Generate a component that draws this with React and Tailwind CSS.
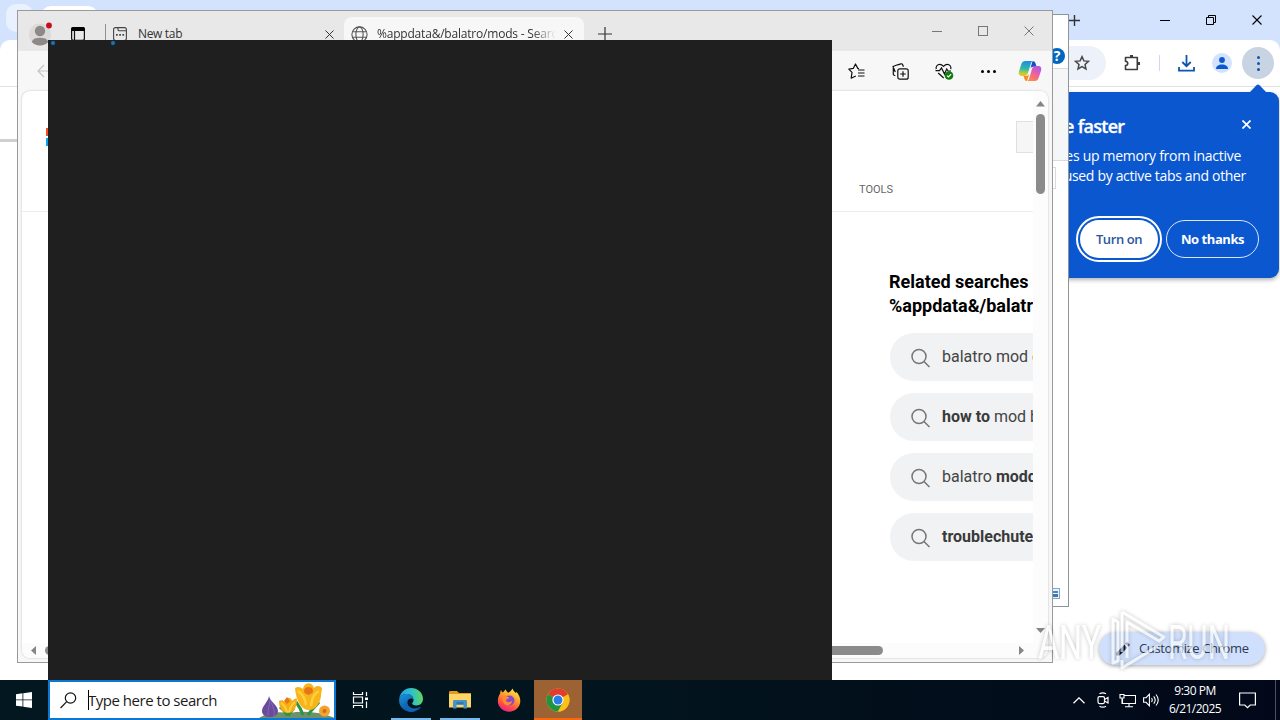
import React from 'react';

const related = [
  [{ t: 'balatro mod ' }, { t: 'discord' }],
  [{ t: 'how to', b: true }, { t: ' mod balatro' }],
  [{ t: 'balatro ' }, { t: 'modded', b: true }],
  [{ t: 'troublechute', b: true }],
];

function CloseIcon({ size = 9, width = 1.1 }) {
  return (
    <svg width={size} height={size} viewBox="0 0 10 10" fill="none" stroke="currentColor" strokeWidth={width} className="shrink-0">
      <path d="M.5.5l9 9M9.5.5l-9 9" />
    </svg>
  );
}

function PlusIcon({ size, width }) {
  return (
    <svg width={size} height={size} viewBox="0 0 14 14" fill="none" stroke="currentColor" strokeWidth={width} className="shrink-0">
      <path d="M7 0v14M0 7h14" />
    </svg>
  );
}

function GlobeIcon() {
  return (
    <svg width="17" height="17" viewBox="0 0 17 17" fill="none" stroke="#555" strokeWidth="1.1" className="shrink-0">
      <circle cx="8.5" cy="8.5" r="7.6" />
      <ellipse cx="8.5" cy="8.5" rx="3.6" ry="7.6" />
      <path d="M1.6 5.7h13.8M1.6 11.3h13.8" />
    </svg>
  );
}

function CopilotIcon() {
  return (
    <svg width="24" height="22" viewBox="0 0 24 22">
      <defs>
        <linearGradient id="cpA" x1="0.3" y1="0" x2="0.2" y2="1">
          <stop offset="0" stopColor="#1c8fe0" />
          <stop offset="0.5" stopColor="#32b8a8" />
          <stop offset="0.8" stopColor="#b9cf3c" />
          <stop offset="1" stopColor="#f4c21f" />
        </linearGradient>
        <linearGradient id="cpB" x1="0.8" y1="0" x2="0.3" y2="1">
          <stop offset="0" stopColor="#a35cf0" />
          <stop offset="0.5" stopColor="#ee5fa2" />
          <stop offset="1" stopColor="#ff8a45" />
        </linearGradient>
      </defs>
      <path d="M15 1.2c1.8 0 2.2 1.2 2.8 3l.8 2.6h-3.4c-1.6 0-2.6.8-3.1 2.4L14.6 1z" fill="#1b4fbf" />
      <path d="M7.5 1h7.8c-1.4 0-2 1.2-2.5 2.7L10 13c-.6 1.9-1.5 3-3.5 3H3.6C1.2 16 .2 14 .9 11.6L3.4 4C4 2.2 5.2 1 7.5 1z" fill="url(#cpA)" />
      <path d="M16.5 21H8.7c1.4 0 2-1.2 2.5-2.7L14 9c.6-1.9 1.5-3 3.5-3h2.9c2.4 0 3.4 2 2.7 4.400L20.600 18c-.6 1.800-1.800 3-4.100 3z" fill="url(#cpB)" />
      <path d="M9 21c-1.800 0-2.200-1.200-2.800-3l-.6-2h2.900c1.400 0 2.300-.9 2.900-2.400z" fill="#f58b2a" />
    </svg>
  );
}

function ChromeWindow() {
  return (
    <div className="absolute left-0 top-0 w-[1280px] h-[680px] bg-[#d3e3fd] flex flex-col">
      <div className="h-10 shrink-0 flex items-center">
        <div className="ml-[6px] -mt-1 w-[27px] h-[28px] rounded-[10px] bg-[#e9f1fe]" />
        <div className="ml-[8px] mt-[6px] w-[57px] h-[34px] self-start rounded-t-[10px] bg-white" />
        <div className="ml-[971px] text-[#333]"><PlusIcon size={11} width={1.8} /></div>
        <div className="ml-auto flex text-black">
          <div className="w-[46px] flex items-center justify-center">
            <svg width="10" height="10"><path d="M0 5.5h10" stroke="currentColor" /></svg>
          </div>
          <div className="w-[46px] flex items-center justify-center">
            <svg width="10" height="10" fill="none" stroke="currentColor">
              <path d="M.5 2.5h7v7h-7zM2.5 2.500v-2h7v7h-2" />
            </svg>
          </div>
          <div className="w-[46px] flex items-center justify-center"><CloseIcon size={10} /></div>
        </div>
      </div>
      <div className="h-[47px] shrink-0 bg-white rounded-t-[10px] border-b border-[#dfe1e5] flex items-center justify-end">
        <div className="w-[60px] h-[34px] rounded-r-full bg-[#edf1fa] flex items-center justify-end pr-4 mr-[17px] -ml-px">
          <svg width="16" height="16" viewBox="0 0 24 24" fill="none" stroke="#474747" strokeWidth="2.200">
            <path d="M12 2.500l2.800 6.300 6.900.7-5.200 4.600 1.500 6.800-6-3.600-6 3.600 1.500-6.800-5.200-4.600 6.900-.7z" />
          </svg>
        </div>
        <svg width="18" height="18" viewBox="0 0 18 18" fill="none" stroke="#3c3c3c" strokeWidth="1.600" className="mr-[18px]">
          <path d="M2.500 3.500h11.800v12h-11.800v-4c3-.4 3-3.800 0-4.200z" strokeLinejoin="round" />
          <path d="M7 2.300h3M15.800 8v3" strokeWidth="2.400" />
        </svg>
        <div className="w-px h-4 bg-[#cdd9ee] mr-[18px]" />
        <svg width="17" height="17" viewBox="0 0 17 17" fill="none" stroke="#0b57b0" strokeWidth="1.800" className="mr-[17px]">
          <path d="M8.500 0v11M4.300 7l4.200 4.200L12.700 7M1 12v3.700h15V12" />
        </svg>
        <div className="w-5 h-5 rounded-full bg-[#d3e3fd] mr-[10px] flex items-center justify-center">
          <svg width="14" height="14" viewBox="0 0 14 14" fill="#0b57d0">
            <circle cx="7" cy="4" r="2.900" />
            <path d="M1 13c0-3 2.500-4.500 6-4.500s6 1.500 6 4.500z" />
          </svg>
        </div>
        <div className="w-8 h-8 rounded-full bg-[#c9d4e3] mr-[6px] flex flex-col items-center justify-center gap-[3px]">
          <span className="w-[3px] h-[3px] rounded-full bg-[#0b57b0]" />
          <span className="w-[3px] h-[3px] rounded-full bg-[#0b57b0]" />
          <span className="w-[3px] h-[3px] rounded-full bg-[#0b57b0]" />
        </div>
      </div>
      <div className="flex-1 bg-white pt-[52px]">
        <div className="h-[3px] w-[40px] bg-[#d0d0d0]" />
      </div>
      <MemoryBubble />
      <div className="absolute left-[1099px] top-[632px] w-[166px] h-[33px] rounded-full bg-[#d0e0fc] shadow-[0_1px_4px_rgba(0,0,0,0.35)] flex items-center pl-[17px] gap-[9px] text-[#2c3a57]">
        <svg width="14" height="14" viewBox="0 0 14 14" fill="#0b1b38">
          <path d="M.5 13.500v-3L8.300 2.700l3 3-7.800 7.800zM9.300 1.700L10.400.6c.4-.4.9-.4 1.300 0l1.700 1.700c.4.4.4.9 0 1.300l-1.100 1.100z" />
        </svg>
        <span className="text-[13px] tracking-[-0.370px] whitespace-nowrap">Customize Chrome</span>
      </div>
    </div>
  );
}

function MemoryBubble() {
  return (
    <div className="absolute left-[960px] top-[92px] w-[319px] h-[186px] rounded-[9px] bg-[#0b57d0] text-white shadow-[0_2px_4px_rgba(0,0,0,0.3)]">
      <svg width="18" height="9" viewBox="0 0 18 9" className="absolute left-[289px] -top-2" fill="#0b57d0">
        <path d="M0 9L7.500 1.300q1.500-1.500 3 0L18 9z" />
      </svg>
      <div className="flex items-center pl-[104px] pr-[28px] pt-[20px] h-[48px]">
        <span className="text-[18px] font-semibold tracking-[-0.700px] leading-[27px] whitespace-nowrap [-webkit-text-stroke:0.3px_white]">e faster</span>
        <span className="ml-auto -mt-1"><CloseIcon size={9} width={1.900} /></span>
      </div>
      <div className="pt-[6px] text-[14px] leading-[20px] whitespace-nowrap">
        <p className="pr-[38px] text-right tracking-[-0.280px]">es up memory from inactive</p>
        <p className="pr-[33px] text-right tracking-[-0.330px]">used by active tabs and other</p>
      </div>
      <div className="mt-[30px] flex items-center justify-end gap-[4px] pr-[20px] text-[13px] font-semibold">
        <div className="w-[86px] h-[46px] rounded-full border-2 border-white p-[2px]">
          <div className="w-full h-full rounded-full bg-white text-[#2a569e] flex items-center justify-center pt-[2px] tracking-[-0.400px]">Turn on</div>
        </div>
        <div className="w-[93px] h-[38px] rounded-full border border-[#dbe7ff] flex items-center justify-center pt-[2px] tracking-[-0.450px] font-bold">No thanks</div>
      </div>
    </div>
  );
}

function ExplorerWindow() {
  return (
    <div className="absolute left-[600px] top-[14px] w-[469px] h-[593px] bg-white border border-[#8d949c] flex flex-col items-end">
      <div className="h-[53px] w-full flex items-end justify-end pb-[4px] pr-[3px]">
        <div className="w-4 h-4 rounded-full bg-[#0067c0] text-white text-[14px] leading-4 font-bold text-center">?</div>
      </div>
      <div className="h-[93px] w-full bg-[#f5f6f7] border-y border-[#dadbdc]" />
      <div className="mt-[6px] mr-[12px] w-[100px] h-[22px] border border-[#d9d9d9]" />
      <div className="mt-auto mb-[7px] mr-[8px] w-[14px] h-[11px] border border-[#7fa7cf] bg-[#eaf3fb] flex flex-col items-center justify-center gap-[1px]">
        <span className="w-[9px] h-[2px] bg-[#4d86bd]" />
        <span className="w-[9px] h-[3px] bg-[#3f78ad]" />
      </div>
    </div>
  );
}

function EdgeTitlebar() {
  return (
    <div className="h-10 shrink-0 bg-[#e8e8e8] pt-[6px] flex items-center text-[#333] text-[12px]">
      <svg width="27" height="27" viewBox="0 0 27 27" className="ml-[9px] mt-[-1px] shrink-0">
        <circle cx="13" cy="14.500" r="11" fill="#dcdad8" />
        <circle cx="13" cy="11" r="5.200" fill="#8c8988" />
        <path d="M4.700 21.700C6 18.800 9 17.800 13 17.800s7 1 8.300 3.900a11 11 0 0 1-16.600 0z" fill="#8c8988" />
        <circle cx="22" cy="5.500" r="2.900" fill="#c50f1f" />
      </svg>
      <svg width="14" height="14" viewBox="0 0 14 14" className="ml-[17px] shrink-0">
        <rect x=".6" y=".6" width="12.800" height="12.800" rx="2" fill="none" stroke="#111" strokeWidth="1.200" />
        <path d="M0 4V2a2 2 0 0 1 2-2h10a2 2 0 0 1 2 2v2z" fill="#000" />
        <path d="M3.500 3v10" stroke="#111" strokeWidth="1.200" />
      </svg>
      <div className="ml-[20px] w-px h-5 bg-[#8f8f8f]" />
      <div className="w-[238px] flex items-center pl-[7px]">
        <svg width="14" height="14" viewBox="0 0 14 14" fill="none" stroke="#444" strokeWidth="1.100" className="shrink-0">
          <rect x=".6" y=".6" width="12.800" height="13" rx="2" />
          <path d="M5 .8v1.700c0 .8.500 1.300 1.300 1.300h7" />
          <path d="M3 7.800h1.700M6.200 7.800h1.700M9.400 7.800h1.700" strokeWidth="1.700" />
        </svg>
        <span className="ml-[11px] tracking-[-0.330px] whitespace-nowrap">New tab</span>
        <span className="ml-auto mr-[10px]"><CloseIcon /></span>
      </div>
      <div className="w-[240px] h-full bg-[#f7f7f7] rounded-t-lg flex items-center pl-[7px] pr-[11px]">
        <GlobeIcon />
        <span className="ml-[9px] w-[179px] overflow-hidden whitespace-nowrap tracking-[-0.200px] [mask-image:linear-gradient(to_right,#000_155px,transparent_179px)]">
          %appdata&amp;/balatro/mods - Search
        </span>
        <span className="ml-auto"><CloseIcon /></span>
      </div>
      <span className="ml-[14px]"><PlusIcon size={14} width={1.200} /></span>
      <div className="ml-auto -mt-[6px] flex text-[#777]">
        <div className="w-[46px] flex items-center justify-center">
          <svg width="10" height="10"><path d="M0 5.500h10" stroke="currentColor" /></svg>
        </div>
        <div className="w-[46px] flex items-center justify-center">
          <div className="w-[10px] h-[10px] border border-[#777]" />
        </div>
        <div className="w-[46px] flex items-center justify-center"><CloseIcon size={10} width={1} /></div>
      </div>
    </div>
  );
}

function EdgeToolbar() {
  return (
    <div className="h-10 shrink-0 flex items-center pr-[2px] pl-[19px]">
      <svg width="12" height="14" viewBox="0 0 12 14" fill="none" stroke="#c4c4c4" strokeWidth="1.200">
        <path d="M12 7H1M7 1L1 7l6 6" />
      </svg>
      <div className="ml-auto w-11 flex justify-center">
        <svg width="17" height="17" viewBox="0 0 17 17" fill="none" stroke="#111" strokeWidth="1.200" strokeLinejoin="round">
          <path d="M11 5.600L9.800 5.400 7.500 1 5.300 5.400.8 6.100 4 9.300l-.8 5.900 4.600-2.200" />
          <path d="M10 7h6.500M10 10h6.500M10 13h6.500" />
        </svg>
      </div>
      <div className="w-11 flex justify-center">
        <svg width="17" height="17" viewBox="0 0 17 17" fill="none" stroke="#111" strokeWidth="1.200">
          <path d="M3.300 12.500l-1-.2a1.500 1.500 0 0 1-1-1.700V3.600M3.300 9L1 3.500 5.500 1.800 9 .8c.9-.2 1.400.2 1.700 1l.7 2" />
          <rect x="5.800" y="5.800" width="10.400" height="10.400" rx="2" />
          <path d="M11 8.200v5.600M8.200 11h5.600" />
        </svg>
      </div>
      <div className="w-11 flex justify-center">
        <svg width="19" height="17" viewBox="0 0 19 17" fill="none" stroke="#111" strokeWidth="1.200">
          <path d="M1.200 6.200C.6 3.500 2.300 1.300 4.700 1.300c1.700 0 2.800.9 3.800 2 1-1.100 2.100-2 3.800-2 2.400 0 4.100 2.200 3.500 4.900M3.200 10l5.500 5" />
          <path d="M.5 7.700h4L6.500 5l3 6 2.200-5 1.300 2h3" />
          <circle cx="14" cy="12.500" r="4.300" fill="#107c10" stroke="none" />
          <path d="M12 12.600l1.500 1.400 2.600-2.800" stroke="#fff" />
        </svg>
      </div>
      <div className="w-11 flex justify-center gap-[3px]">
        <span className="w-[3px] h-[3px] rounded-full bg-black" />
        <span className="w-[3px] h-[3px] rounded-full bg-black" />
        <span className="w-[3px] h-[3px] rounded-full bg-black" />
      </div>
      <div className="w-10 flex justify-center"><CopilotIcon /></div>
    </div>
  );
}

function SearchPage() {
  return (
    <div className="w-[1011px] h-full overflow-hidden font-['Roboto',sans-serif]">
      <div className="h-[121px] border-b border-[#ececec]">
        <div className="flex items-start pt-[30px]">
          <div className="ml-6 mt-[7px] grid grid-cols-2 gap-[2px]">
            <span className="w-2 h-2 bg-[#f25022]" />
            <span className="w-2 h-2 bg-[#7fba00]" />
            <span className="w-2 h-2 bg-[#00a4ef]" />
            <span className="w-2 h-2 bg-[#ffb900]" />
          </div>
          <div className="ml-auto w-[17px] h-8 border border-r-0 border-[#e0e0e0] bg-[#f6f6f6]" />
        </div>
        <div className="pl-[837px] pt-[29px] text-[11px] leading-4 text-[#666]">TOOLS</div>
      </div>
      <div className="pl-[868px] pt-[58px] w-[1200px]">
        <h2 className="-ml-px text-[18px] leading-6 font-bold text-black">
          Related searches<br />%appdata&amp;/balatro/mods
        </h2>
        <div className="mt-[15px] flex flex-col gap-3">
          {related.map((parts, i) => (
            <div key={i} className="h-12 rounded-l-full bg-[#f1f2f4] flex items-center pl-[21px] text-[16px] text-[#444]">
              <svg width="20" height="20" viewBox="0 0 20 20" fill="none" stroke="#767676" strokeWidth="1.500" className="mt-px">
                <circle cx="8" cy="8.500" r="7" />
                <path d="M13 13.500l5.500 5.500" />
              </svg>
              <span className="ml-[11px] whitespace-pre -mt-px">
                {parts.map((p, j) => <span key={j} className={p.b ? 'font-bold text-[#3a3a3a]' : ''}>{p.t}</span>)}
              </span>
            </div>
          ))}
        </div>
      </div>
    </div>
  );
}

function EdgeWindow() {
  return (
    <div className="absolute left-[17px] top-[10px] w-[1036px] h-[653px] border border-[#9a9a9a] bg-[#f7f7f7] flex flex-col">
      <EdgeTitlebar />
      <EdgeToolbar />
      <div className="h-[567px] mx-[4px] rounded-lg bg-white overflow-hidden shadow-[0_0_2px_rgba(0,0,0,0.25)]">
        <div className="h-[552px] flex">
          <SearchPage />
          <div className="w-[15px] bg-[#fcfcfc] flex flex-col items-center pt-[10px] pb-[10px]">
            <svg width="9" height="6"><path d="M0 5.500L4.500 0 9 5.500z" fill="#858585" /></svg>
            <div className="mt-[7px] w-[9px] h-[80px] rounded-full bg-[#8b8b8b]" />
            <svg width="9" height="5" className="mt-auto"><path d="M0 0h9L4.500 5z" fill="#858585" /></svg>
          </div>
        </div>
        <div className="h-[15px] bg-[#fcfcfc] flex items-center pl-[9px] pr-[24px]">
          <svg width="5" height="9"><path d="M5 0v9L0 4.500z" fill="#858585" /></svg>
          <div className="ml-[9px] w-[838px] h-[9px] rounded-full bg-[#8b8b8b]" />
          <svg width="5" height="9" className="ml-auto"><path d="M0 0v9l5-4.500z" fill="#858585" /></svg>
        </div>
      </div>
    </div>
  );
}

function DarkWindow() {
  return (
    <div className="absolute left-[48px] top-[40px] w-[784px] h-[640px] bg-[#1f1f1f] flex items-start pl-[3px] pt-[1px] gap-[56px]">
      <span className="w-[4px] h-[4px] rounded-full bg-[#2a70a3] ring-1 ring-[#0c2b42]" />
      <span className="w-[4px] h-[4px] rounded-full bg-[#2a70a3] ring-1 ring-[#0c2b42]" />
    </div>
  );
}

function Crocuses() {
  return (
    <svg width="76" height="36" viewBox="0 0 76 36">
      <path d="M0 36q12-8 30-5 24-4 46 5z" fill="#6f9169" />
      <path d="M44 33c-2-6-4-9-7-13M49 33c3-5 7-8 11-13M28 34c-1-4-4-6-7-9M29 34c2-4 4-5 6-8" stroke="#2f9443" strokeWidth="3" fill="none" />
      <path d="M10 14c1 6 9 9 9 15 0 4-4 6-8 6s-8-2-8-6c0-5 6-9 7-15z" fill="#6a4a9c" />
      <path d="M11 18c0 6-3 10-2 16M12 20c2 5 4 8 3 14" stroke="#8468af" fill="none" />
      <path d="M20 19c2-1 4-1 6 1 0-5 6-6 7-1 2-2 4-3 5-2 0 8-3 14-9 14s-9-5-9-12z" fill="#f5ae16" />
      <path d="M22 21c4 2 5 6 6 9M36 20c-4 3-5 6-6 10" stroke="#ffcf3c" strokeWidth="2" fill="none" />
      <path d="M28 15l3 4-3 3-3-3z" fill="#e77817" />
      <path d="M36 6c3-2 6-1 8 1 1-7 9-8 11-1 3-3 6-2 8 0 0 2-1 5-1 8-1 8-6 14-12 14-7 0-13-8-14-22z" fill="#f8b51b" />
      <path d="M39 9c5 3 7 8 8 14M60 9c-6 3-7 8-8 15" stroke="#ffcf3e" strokeWidth="2.500" fill="none" />
      <path d="M49.500 5c4 0 5 3 4 6l-4 2-4-2c-1-3 0-6 4-6z" fill="#e8741a" />
      <circle cx="65.500" cy="29" r="5.500" fill="#f0a531" />
      <circle cx="65.500" cy="29" r="2" fill="#d36a1c" />
    </svg>
  );
}

function EdgeLogo() {
  return (
    <svg width="24" height="24" viewBox="0 0 24 24">
      <defs>
        <linearGradient id="egA" x1="0" y1="0.500" x2="1" y2="0.400">
          <stop offset="0" stopColor="#1f9fe4" />
          <stop offset="0.500" stopColor="#2cbfd0" />
          <stop offset="1" stopColor="#62d85a" />
        </linearGradient>
        <linearGradient id="egB" x1="0" y1="0" x2="0.600" y2="1">
          <stop offset="0" stopColor="#1b93dc" />
          <stop offset="1" stopColor="#0c4d9b" />
        </linearGradient>
      </defs>
      <path d="M.3 10.500C1.200 4.300 6 0 12 0c7 0 12 5 12 10.800 0 4.200-3 6.700-6.600 6.700-3 0-4.500-1.200-4.200-2.200.2-.7 1.300-1.300 1.300-3.300C14.500 8.500 11.500 6 8 6 4 6 1.300 8 .3 10.500z" fill="url(#egA)" />
      <path d="M.2 11C.8 8 4 6 8 6c3.500 0 6.500 2.500 6.500 6-1-2.300-5-2-6 1-1.200 5 5 9.800 11.800 6.200 1.400-.7 2 0 1.300.9C19.400 22.500 16 24 12 24 5 24-.8 18 .2 11z" fill="url(#egB)" />
      <path d="M8.500 13c-2 5 4 10 11 6.800C17 23.500 13.500 24.500 10 23.400 6 21 4.500 15 8.500 13z" fill="#1263b5" />
    </svg>
  );
}

function FirefoxLogo() {
  return (
    <svg width="24" height="24" viewBox="0 0 24 24">
      <defs>
        <linearGradient id="ffA" x1="0.800" y1="0" x2="0.300" y2="1">
          <stop offset="0" stopColor="#fff04a" />
          <stop offset="0.400" stopColor="#ffa12a" />
          <stop offset="0.750" stopColor="#ff4a48" />
          <stop offset="1" stopColor="#e6208c" />
        </linearGradient>
      </defs>
      <path d="M15.500.5c.5 2 2 3 3.300 4.500.5-.3.5-.8.600-1.300C22 6.500 23.300 9.500 23.300 13c0 6-5 10.700-11.200 10.700S.800 19 .800 13c0-3.500 1.400-6 2.400-7.800 0-1.200.2-2.200.9-3.200.2 1 .8 1.900 1.600 2.500C7 3.500 7.400 2.200 9 1.500c0 1.300.8 2.500 2.300 3.200 1.500-.6 3-2 4.200-4.200z" fill="url(#ffA)" />
      <circle cx="12.500" cy="12.500" r="5" fill="#8a48cc" />
      <path d="M5.500 9c2.500-1.500 5-.5 6.800.6-1 1.500-3 1.500-3.500 2.700 1 2.500 4 2.200 6.500.7-.8 3.500-4 5-6.800 3.800C6 15.500 5 12 5.500 9z" fill="#ff8a2b" />
    </svg>
  );
}

function ChromeLogo() {
  return (
    <svg width="24" height="24" viewBox="0 0 24 24">
      <circle cx="12" cy="12" r="11.500" fill="#fbc116" />
      <path d="M12 12L2 6.250A11.500 11.500 0 0 1 22 6.250z" fill="#e33b2e" />
      <path d="M2.040 6.250A11.500 11.500 0 0 0 12 23.500l5-8.700L12 12z" fill="#229342" />
      <path d="M12 23.500l4.800-8.700L12 12l10.100-5.500A11.500 11.500 0 0 1 12 23.500z" fill="#fbc116" />
      <circle cx="12" cy="12" r="5.600" fill="#fff" />
      <circle cx="12" cy="12" r="4.500" fill="#2b7de9" />
    </svg>
  );
}

function FolderLogo() {
  return (
    <svg width="22" height="20" viewBox="0 0 22 20">
      <path d="M0 2.500C0 1.500.5 1 1.500 1H8l2 2h12v5H0z" fill="#e09a1e" />
      <path d="M0 4h22v13.500H0z" fill="#fbd566" />
      <path d="M4 18.500v-7c0-1 .5-1.500 1.500-1.500h11c1 0 1.500.5 1.500 1.500v7h-3.500V15h-7v3.500z" fill="#4a93c9" />
      <path d="M7.500 12h7v2h-7z" fill="#2f76ad" />
    </svg>
  );
}

function TaskbarApp({ children, bar }) {
  return (
    <div className="relative w-[49px] h-10 flex items-center justify-center">
      {children}
      {bar && <span className="absolute bottom-0 left-[5px] w-10 h-[2px] bg-[#76b9ed]" />}
    </div>
  );
}

function Taskbar() {
  return (
    <div className="absolute left-0 top-[680px] w-[1280px] h-10 bg-linear-to-r from-[#02171f] via-[#02141d] to-[#020819] flex items-center text-white">
      <div className="w-12 flex justify-center">
        <svg width="16" height="16" viewBox="0 0 16 16" fill="#fff">
          <path d="M0 2.200L6.500 1.300v6.200H0zM7.300 1.200L16 0v7.500H7.300zM0 8.300h6.500v6.300L0 13.700zM7.300 8.300H16V16l-8.700-1.200z" />
        </svg>
      </div>
      <div className="w-[288px] h-10 border-2 border-[#0b78d4] bg-white text-[#1b1b1b] flex items-center pl-[10px]">
        <svg width="17" height="17" viewBox="0 0 17 17" fill="none" stroke="#111" strokeWidth="1.200">
          <circle cx="10.500" cy="6" r="5.200" />
          <path d="M6.700 9.700L.6 16" />
        </svg>
        <span className="ml-[11px] w-px h-5 bg-black" />
        <span className="-ml-px text-[15px] tracking-[-0.480px] whitespace-nowrap">Type here to search</span>
        <span className="ml-auto -mr-px"><Crocuses /></span>
      </div>
      <div className="w-[50px] flex justify-center">
        <svg width="18" height="16" viewBox="0 0 18 16" fill="none" stroke="#fff" strokeWidth="1.200" className="-ml-px">
          <path d="M1.500 0v2.500h9V0M1.500 16v-2.500h9V16M1.500 5h9v6h-9zM14.500 0v4M14.500 9.500V16" />
          <path d="M13 5.500h3v2.500h-3z" fill="#fff" stroke="none" />
        </svg>
      </div>
      <TaskbarApp bar><EdgeLogo /></TaskbarApp>
      <TaskbarApp bar><FolderLogo /></TaskbarApp>
      <TaskbarApp><FirefoxLogo /></TaskbarApp>
      <div className="ml-px w-12 h-10 bg-[#9c6233] border-b-2 border-[#f7690c] flex items-center justify-center pt-[2px]"><ChromeLogo /></div>

      <div className="ml-auto flex items-center">
        <div className="w-6 flex justify-center">
          <svg width="12" height="7" fill="none" stroke="#fff" strokeWidth="1.300"><path d="M.5 6.300L6 .9l5.500 5.400" /></svg>
        </div>
        <div className="w-6 flex justify-center">
          <svg width="12" height="16" viewBox="0 0 12 16" fill="none" stroke="#fff" strokeWidth="1.200">
            <rect x="1" y="4.600" width="6.500" height="7" rx="1.500" />
            <path d="M7.500 7.500l3.500-2v5.500l-3.500-2M2.500 1.800q3.300-2 6.500 0M2.500 14.200q3.300 2 6.500 0" />
          </svg>
        </div>
        <div className="w-6 flex justify-center">
          <svg width="17" height="15" viewBox="0 0 17 15" fill="none" stroke="#fff" strokeWidth="1.100">
            <path d="M5.500 2.500h11v8H3.500V6M1 1.500h4v3.500H1zM3 5v6M10 10.500v3M6 13.800h8" />
          </svg>
        </div>
        <div className="w-6 flex justify-center">
          <svg width="17" height="14" viewBox="0 0 17 14" fill="none" stroke="#fff" strokeWidth="1.100">
            <path d="M.6 4.700h2.500l3.300-3.500v11.600L3.100 9.300H.6zM8.500 5q1.500 2 0 4M10.700 3.300q3 3.700 0 7.400M13 1.500q4.500 5.500 0 11" />
          </svg>
        </div>
        <div className="w-[64px] text-[12px] leading-[18px] text-center whitespace-nowrap -mt-px">
          <div className="tracking-[-0.500px]">9:30 PM</div>
          <div className="tracking-[-0.520px]">6/21/2025</div>
        </div>
        <div className="w-[40px] flex justify-center">
          <svg width="17" height="17" viewBox="0 0 17 17" fill="none" stroke="#fff" strokeWidth="1.200">
            <path d="M.6 1h15.800v12h-5.200l-2.700 2.700L5.800 13H.6z" />
          </svg>
        </div>
        <div className="ml-[8px] mr-[4px] w-px h-10 bg-[#4a5260]" />
      </div>
    </div>
  );
}

function Watermark() {
  return (
    <div className="absolute left-[1038px] top-[608px] w-[196px] h-[66px] flex items-center opacity-65 text-white font-['Roboto',sans-serif] text-[49px] leading-none [filter:drop-shadow(0_0_2px_rgba(0,0,0,0.35))]">
      <span className="w-[66px] mt-[3px] origin-left scale-x-[0.660]">ANY</span>
      <svg width="60" height="64" viewBox="0 0 60 64" fill="none" stroke="#fff" strokeWidth="3" strokeLinejoin="round" className="ml-[3px] shrink-0">
        <path d="M6 10v44l5-2V13zM15 3v40M15 3l42 25-5 4L20 13v36M15 51v8l36-22" />
      </svg>
      <span className="ml-px w-[62px] mt-[3px] origin-left scale-x-[0.640]">RUN</span>
    </div>
  );
}

export default function App() {
  return (
    <div className="relative w-[1280px] h-[720px] overflow-hidden bg-white font-['Open_Sans','Noto_Sans',sans-serif]">
      <ChromeWindow />
      <ExplorerWindow />
      <EdgeWindow />
      <DarkWindow />
      <Watermark />
      <Taskbar />
    </div>
  );
}
